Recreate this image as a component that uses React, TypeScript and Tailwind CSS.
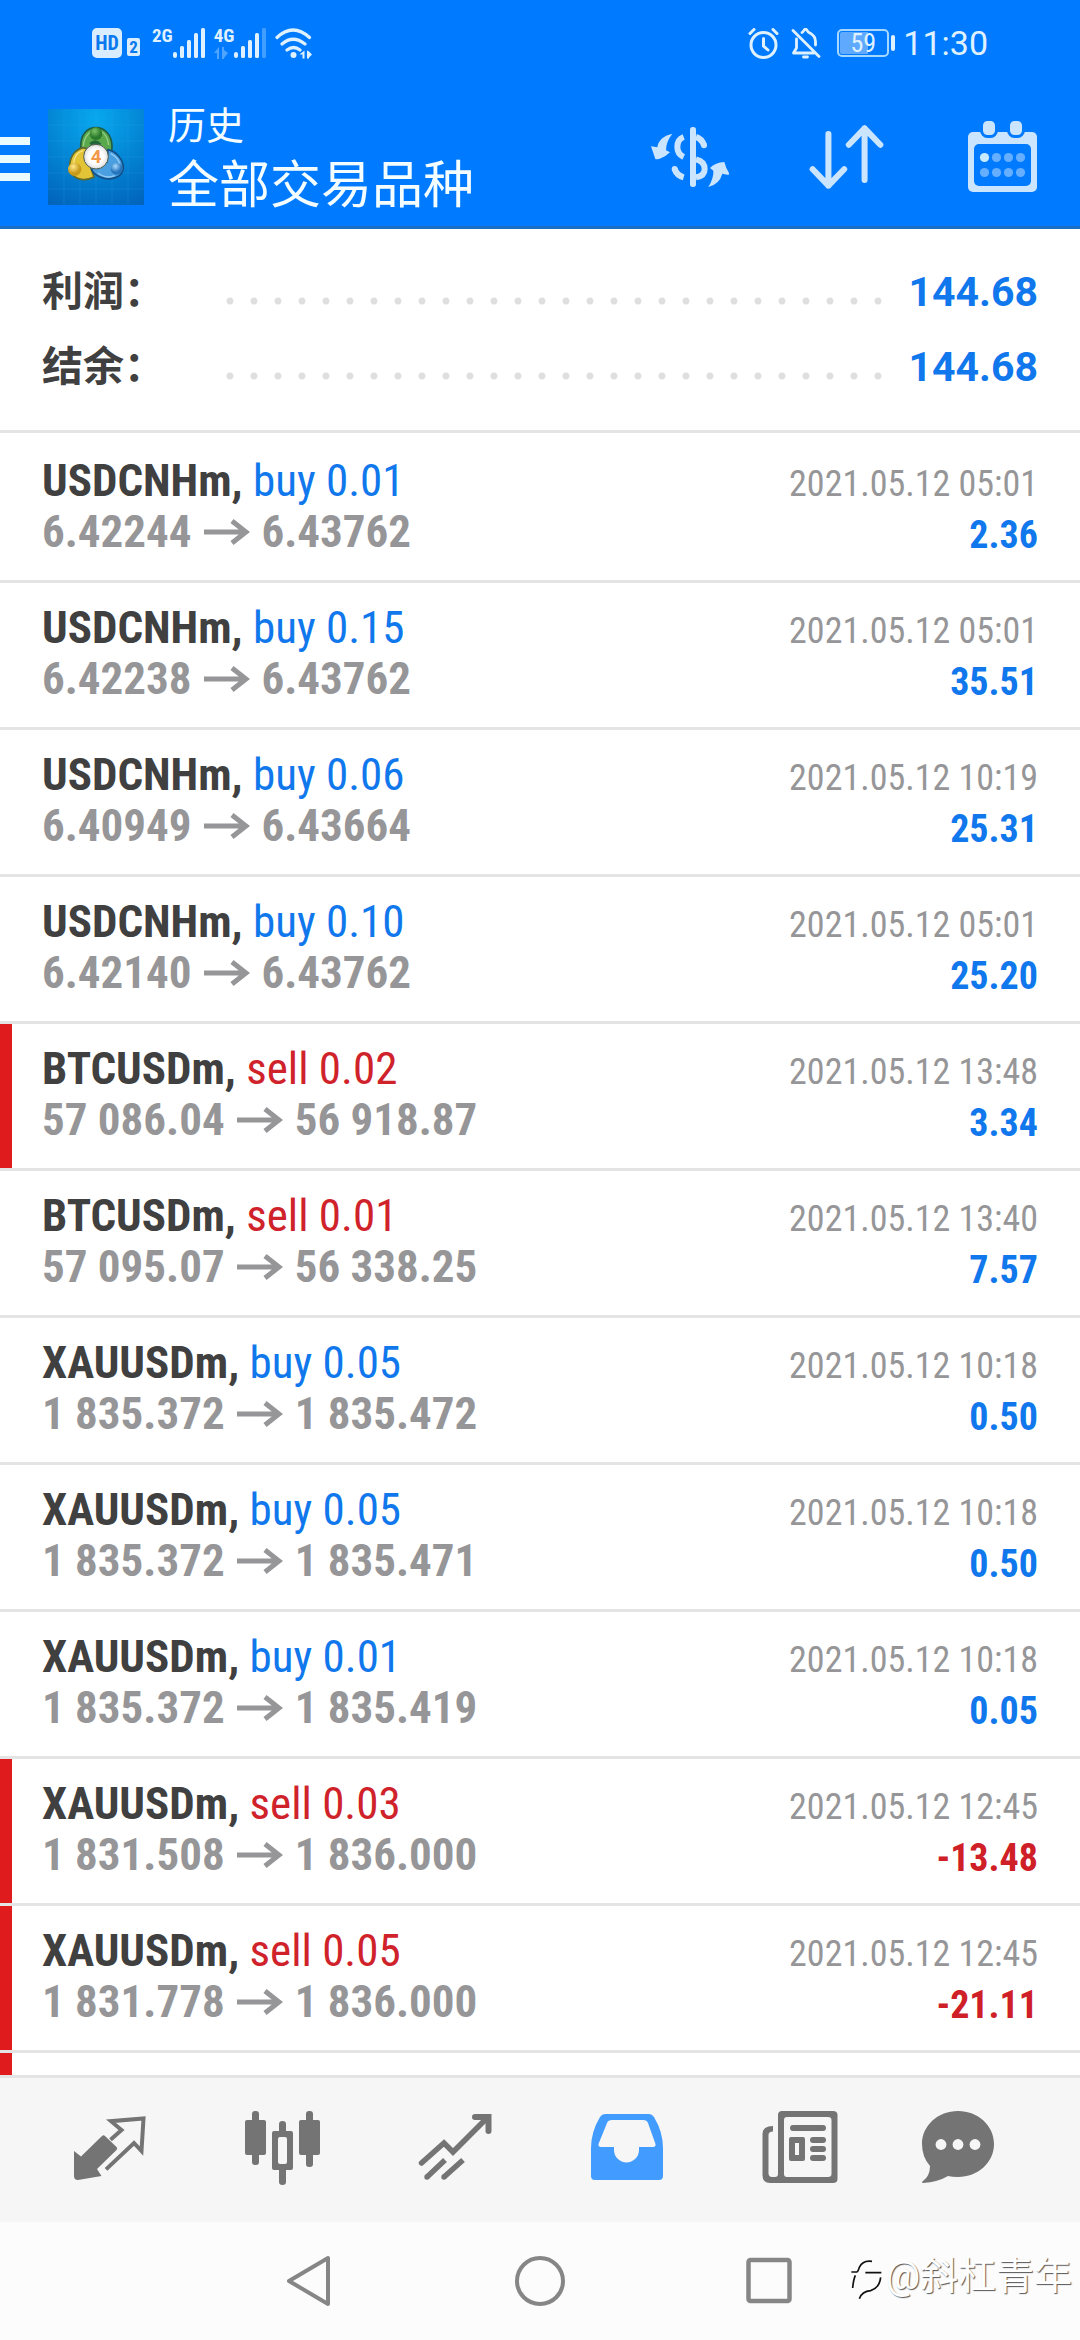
import type { ReactNode } from "react";
import { clsx } from "clsx";

type Deal = {
  symbol: string;
  side: "buy" | "sell";
  volume: string;
  open: string;
  close: string;
  time: string;
  profit: string;
  flagged?: boolean;
};

const deals: Deal[] = [
  { symbol: "USDCNHm", side: "buy", volume: "0.01", open: "6.42244", close: "6.43762", time: "2021.05.12 05:01", profit: "2.36" },
  { symbol: "USDCNHm", side: "buy", volume: "0.15", open: "6.42238", close: "6.43762", time: "2021.05.12 05:01", profit: "35.51" },
  { symbol: "USDCNHm", side: "buy", volume: "0.06", open: "6.40949", close: "6.43664", time: "2021.05.12 10:19", profit: "25.31" },
  { symbol: "USDCNHm", side: "buy", volume: "0.10", open: "6.42140", close: "6.43762", time: "2021.05.12 05:01", profit: "25.20" },
  { symbol: "BTCUSDm", side: "sell", volume: "0.02", open: "57 086.04", close: "56 918.87", time: "2021.05.12 13:48", profit: "3.34", flagged: true },
  { symbol: "BTCUSDm", side: "sell", volume: "0.01", open: "57 095.07", close: "56 338.25", time: "2021.05.12 13:40", profit: "7.57" },
  { symbol: "XAUUSDm", side: "buy", volume: "0.05", open: "1 835.372", close: "1 835.472", time: "2021.05.12 10:18", profit: "0.50" },
  { symbol: "XAUUSDm", side: "buy", volume: "0.05", open: "1 835.372", close: "1 835.471", time: "2021.05.12 10:18", profit: "0.50" },
  { symbol: "XAUUSDm", side: "buy", volume: "0.01", open: "1 835.372", close: "1 835.419", time: "2021.05.12 10:18", profit: "0.05" },
  { symbol: "XAUUSDm", side: "sell", volume: "0.03", open: "1 831.508", close: "1 836.000", time: "2021.05.12 12:45", profit: "-13.48", flagged: true },
  { symbol: "XAUUSDm", side: "sell", volume: "0.05", open: "1 831.778", close: "1 836.000", time: "2021.05.12 12:45", profit: "-21.11", flagged: true },
];

const summary = [
  { label: "利润：", value: "144.68" },
  { label: "结余：", value: "144.68" },
];

function SignalBars({ dimLast = false }: { dimLast?: boolean }) {
  return (
    <svg viewBox="0 0 33 30" className="h-[30px] w-[33px]" fill="currentColor" aria-hidden="true">
      <rect x="0" y="24" width="4" height="6" rx="2" />
      <rect x="7" y="18" width="4" height="12" rx="1.5" />
      <rect x="14" y="12" width="4" height="18" rx="1.5" />
      <rect x="21" y="5" width="4" height="25" rx="1.5" />
      <rect x="28" y="0" width="4" height="30" rx="1.5" opacity={dimLast ? 0.3 : 1} />
    </svg>
  );
}

function StatusBar() {
  return (
    <div className="flex h-[87px] items-center justify-between pr-[92px] pb-px pl-[92px] font-['Roboto_Condensed',Roboto,sans-serif] text-[#dff1ff]">
      <div className="flex items-center">
        <span className="flex h-[30px] w-[30px] items-center justify-center rounded-[5px] bg-[#d9edff] text-[20px] leading-none font-bold text-[#0a78ee]">
          HD
        </span>
        <span className="mt-2 ml-[5px] flex h-[18px] w-[13px] items-center justify-center rounded-[2px] bg-[#d9edff] text-[17px] leading-none font-bold text-[#0a78ee]">
          2
        </span>
        <span className="ml-3 self-start text-[19px] leading-[15px] font-bold">2G</span>
        <SignalBars />
        <div className="ml-2 flex flex-col self-start">
          <span className="text-[19px] leading-[15px] font-bold">4G</span>
          <svg viewBox="0 0 14 12" className="mt-1 h-3 w-3.5" fill="currentColor" opacity="0.35" aria-hidden="true">
            <path d="M5 0v12H3V6H0zM8 0h2v3l4 3-4 5V12H8z" />
          </svg>
        </div>
        <SignalBars dimLast />
        <svg viewBox="0 0 37 31" className="ml-2 h-[31px] w-[37px]" fill="none" stroke="currentColor" strokeWidth="3.2" strokeLinecap="round" aria-hidden="true">
          <path d="M2 9.500Q18 -5.500 34.500 9.500M7 16q11-9.500 23 0M12 22q6.500-5 13 0" />
          <circle cx="18.500" cy="27" r="3" fill="currentColor" stroke="none" />
          <path d="M29.500 22.500v8h-2v-4h-3zM32 22.500l2 1 3 3-3 3v1h-2z" fill="currentColor" stroke="none" />
        </svg>
      </div>

      <div className="flex items-center">
        <svg viewBox="0 0 31 31" className="h-[31px] w-[31px]" fill="none" stroke="currentColor" strokeWidth="3" strokeLinecap="round" aria-hidden="true">
          <circle cx="15.500" cy="17" r="12.500" />
          <path d="M15.500 10.500v7.500l4.500 4M2 5.500l4-4M25 1.500l4 4" />
        </svg>
        <svg viewBox="0 0 30 31" className="ml-3 h-[31px] w-[30px]" fill="none" stroke="currentColor" strokeWidth="2.800" strokeLinecap="round" strokeLinejoin="round" aria-hidden="true">
          <path d="M2 2.500l26 26M5.500 11v9l-3 5H23M11 4.500c2-.8 2-3.500 3.500-3.500s1.500 2.500 3.500 3.500c4 2 6.500 5 6.500 9V17" />
          <path d="M12.500 29h4" />
        </svg>
        <div className="ml-4 flex items-center">
          <span className="flex h-7 w-[52px] items-center justify-center rounded-[5px] border-2 border-[#a6d8ff] bg-linear-to-r from-[#5fa9ff] from-60% to-transparent to-60% bg-clip-content p-px text-[26px] leading-none">
            59
          </span>
          <span className="ml-0.5 h-4 w-1 rounded-sm bg-[#dff1ff]" />
        </div>
        <time className="ml-2 font-[Roboto,sans-serif] text-[34px] leading-none">11:30</time>
      </div>
    </div>
  );
}

function Logo() {
  return (
    <svg viewBox="0 0 288 288" className="h-24 w-24 shrink-0" role="img" aria-label="MetaTrader 4">
      <defs>
        <radialGradient id="sky" cx="0.5" cy="0.1" r="1">
          <stop offset="0" stopColor="#08a8ee" />
          <stop offset="0.55" stopColor="#0382d2" />
          <stop offset="1" stopColor="#0164bb" />
        </radialGradient>
        <radialGradient id="white">
          <stop offset="0.6" stopColor="#fff" />
          <stop offset="1" stopColor="#dcdcdc" />
        </radialGradient>
        <radialGradient id="green" cx="0.4" cy="0.3">
          <stop offset="0" stopColor="#7cc268" />
          <stop offset="1" stopColor="#2c7a2c" />
        </radialGradient>
        <radialGradient id="yellow" cx="0.4" cy="0.3">
          <stop offset="0" stopColor="#ffe98a" />
          <stop offset="1" stopColor="#c79a1a" />
        </radialGradient>
        <radialGradient id="blue" cx="0.4" cy="0.3">
          <stop offset="0" stopColor="#a9dcff" />
          <stop offset="1" stopColor="#2473bb" />
        </radialGradient>
      </defs>
      <rect width="288" height="288" fill="url(#sky)" />
      <path
        d="M48 0v288M96 0v288M144 0v288M192 0v288M240 0v288M0 48h288M0 96h288M0 144h288M0 192h288M0 240h288"
        stroke="#3bb4f2"
        strokeWidth="2"
        opacity="0.25"
      />
      <g strokeWidth="5">
        <path d="M98 120C96 76 118 56 144 56S192 78 192 112Q192 134 184 148L120 130Z" fill="#5aa84c" stroke="#1f5f45" />
        <path d="M138 204C112 218 84 212 72 194C58 168 66 128 104 116L122 120L130 180Z" fill="#e3c437" stroke="#5f6a2c" />
        <path d="M180 122C206 128 226 152 226 178C222 208 184 216 156 204C142 198 134 190 130 180L176 160Z" fill="#4a9fe0" stroke="#124f86" />
      </g>
      <g fill="none" strokeWidth="4" opacity="0.7">
        <path d="M106 112C108 82 124 66 144 65S178 80 182 108" stroke="#b5e3a0" />
        <path d="M78 176C74 148 86 130 106 125" stroke="#fff3a6" />
        <path d="M188 134C206 142 214 156 216 170M150 192C168 206 186 206 200 200" stroke="#b4e0ff" />
      </g>
      <path d="M124 102Q144 84 160 104L152 112H132Z" fill="#24683a" />
      <circle cx="144" cy="74" r="19" fill="url(#green)" />
      <circle cx="80" cy="181" r="20" fill="url(#yellow)" />
      <circle cx="206" cy="179" r="18" fill="url(#blue)" />
      <circle cx="144" cy="143" r="37" fill="url(#white)" stroke="#4a5a4a" strokeWidth="3" />
      <text x="144" y="163" textAnchor="middle" fontSize="56" fontWeight="700" fontFamily="Roboto, sans-serif" fill="#f39a4a">
        4
      </text>
    </svg>
  );
}

function MoneyIcon() {
  return (
    <svg viewBox="33 60 234 180" className="h-[60px] w-[78px]" fill="currentColor" aria-hidden="true">
      <path d="M97 80Q56 90 52 121L33 118Q40 138 46 156Q54 158 64 153Q78 148 90 136L78 130Q78 104 97 80Z" />
      <path d="M205 240Q222 212 220 191L210 183Q226 166 253 165Q258 185 267 198L266 204L247 200Q238 232 205 240Z" />
      <rect x="150" y="60" width="18" height="180" rx="8" />
      <g fill="none" stroke="currentColor" strokeWidth="18">
        <path d="M131 90Q112 97 112 120Q112 141 131 150" />
        <path d="M168 157Q194 163 194 186Q194 207 168 211" />
        <path d="M131 211Q110 205 104 186M168 90Q185 95 192 115" />
      </g>
      <circle cx="104" cy="186" r="9" />
      <circle cx="192" cy="115" r="9" />
    </svg>
  );
}

function SortIcon() {
  return (
    <svg viewBox="506 59 224 191" className="h-16 w-[75px]" fill="none" stroke="currentColor" strokeWidth="18" strokeLinecap="round" strokeLinejoin="round" aria-hidden="true">
      <path d="M564 86V240M517 191L564 240L611 191" />
      <path d="M672 223V69M625 118L672 69L719 118" />
    </svg>
  );
}

function CalendarIcon() {
  return (
    <svg viewBox="0 0 69 71" className="h-[71px] w-[69px]" aria-hidden="true">
      <rect y="11" width="69" height="60" rx="5" fill="currentColor" />
      <rect x="6" y="23" width="57" height="42" rx="5" fill="#007bff" />
      <g fill="currentColor" stroke="#007bff" strokeWidth="3">
        <rect x="13.500" y="-1.500" width="15" height="17" rx="6" />
        <rect x="40.500" y="-1.500" width="15" height="17" rx="6" />
      </g>
      {[36.5, 51.5].map((y) =>
        [16.5, 28.5, 40.5, 52.5].map((x) => (
          <circle key={`${x}-${y}`} cx={x} cy={y} r="4.600" fill={x < 20 && y < 40 ? "#c6eaff" : "#66aeff"} />
        )),
      )}
    </svg>
  );
}

function AppBar() {
  return (
    <div className="flex h-[142px] items-center border-b-3 border-[#1a6fc4]">
      <button type="button" aria-label="菜单" className="mr-[18px]">
        <svg viewBox="0 0 30 56" className="h-14 w-[30px]" fill="#e9fbff" aria-hidden="true">
          <path d="M0 8h30v8H0zM0 26h30v8H0zM0 44h30v8H0z" />
        </svg>
      </button>
      <Logo />
      <div className="ml-6 flex-1 pt-1.5 text-[#f4fdff]">
        <p className="text-[38px] leading-[52px]">历史</p>
        <h1 className="text-[51px] leading-[68px]">全部交易品种</h1>
      </div>
      <div className="flex text-[#cce5ff]">
        <HeaderButton label="资金">
          <MoneyIcon />
        </HeaderButton>
        <HeaderButton label="排序">
          <SortIcon />
        </HeaderButton>
        <HeaderButton label="日期">
          <CalendarIcon />
        </HeaderButton>
      </div>
    </div>
  );
}

function HeaderButton({ label, children }: { label: string; children: ReactNode }) {
  return (
    <button type="button" aria-label={label} className="flex w-[156px] items-center justify-center">
      {children}
    </button>
  );
}

function Summary() {
  return (
    <dl className="border-b-3 border-[#e4e4e4] px-[42px] pt-[26px] pb-[25px] text-[41px] leading-[75px] font-bold">
      {summary.map((row) => (
        <div key={row.label} className="flex items-center">
          <dt className="w-44 text-[#404040]">{row.label}</dt>
          <dd className="flex flex-1 items-center">
            <span className="mt-4 mr-4 h-2 flex-1 bg-[radial-gradient(circle,#dfdfdf_3px,transparent_4px)] bg-[length:24px_8px] bg-repeat-x" />
            <span className="text-[#1078ec]">{row.value}</span>
          </dd>
        </div>
      ))}
    </dl>
  );
}

function Arrow() {
  return (
    <svg viewBox="0 0 46 26" className="h-[26px] w-[46px]" fill="none" stroke="currentColor" strokeWidth="5" aria-label="→">
      <path d="M0 13h42M28 2l14 11-14 11" />
    </svg>
  );
}

function DealRow({ deal }: { deal: Deal }) {
  const sell = deal.side === "sell";
  const loss = deal.profit.startsWith("-");
  return (
    <li className="flex h-[147px] shrink-0 border-b-3 border-[#e4e4e4]">
      <span className={clsx("w-3", deal.flagged && "bg-[#e01b1e]")} />
      <div className="flex flex-1 items-baseline justify-between pt-[19px] pr-[42px] pl-[30px] leading-[51px]">
        <div className="text-[45px] font-bold">
          <p className="text-[#404040]">
            {deal.symbol},{" "}
            <span className={clsx("font-normal", sell ? "text-[#d0222a]" : "text-[#1078ec]")}>
              {deal.side} {deal.volume}
            </span>
          </p>
          <p className="flex items-center gap-3 text-[#969698]">
            {deal.open}
            <Arrow />
            {deal.close}
          </p>
        </div>
        <div className="text-right">
          <p className="text-[36px] text-[#969698]">{deal.time}</p>
          <p className={clsx("text-[38px] font-bold", loss ? "text-[#cf2027]" : "text-[#1078ec]")}>{deal.profit}</p>
        </div>
      </div>
    </li>
  );
}

function TabIcon({ children }: { children: ReactNode }) {
  return (
    <svg viewBox="0 0 80 80" className="h-20 w-20" fill="currentColor" aria-hidden="true">
      {children}
    </svg>
  );
}

const tabs: { label: string; icon: ReactNode }[] = [
  {
    label: "行情",
    icon: (
      <TabIcon>
        <path d="M4 41L11 46.500L32 26Q33.500 24.500 35 26L46.500 37Q48 38.500 46.500 40L27 59L31.500 66L8 70Q4 70 4 66Z" />
        <path d="M42 28.500L51.500 20L41 11.200L73.500 8.500L71.500 41L64 33L37.500 58" fill="none" stroke="currentColor" strokeWidth="4" strokeLinecap="square" />
      </TabIcon>
    ),
  },
  {
    label: "图表",
    icon: (
      <TabIcon>
        <rect x="2" y="10" width="21" height="35" rx="2" />
        <rect x="9" y="1" width="7" height="54" rx="3" />
        <path
          fillRule="evenodd"
          d="M31 21H48Q50 21 50 23V58Q50 60 48 60H31Q29 60 29 58V23Q29 21 31 21ZM37 27Q35 27 35 29V52Q35 54 37 54H42Q44 54 44 52V29Q44 27 42 27Z"
        />
        <path d="M36 22V14Q36 11 39.500 11T43 14V22ZM36 59V72Q36 75 39.500 75T43 72V59Z" />
        <rect x="56" y="10" width="21" height="35" rx="2" />
        <rect x="63" y="1" width="7" height="56" rx="3" />
      </TabIcon>
    ),
  },
  {
    label: "交易",
    icon: (
      <TabIcon>
        <g fill="none" stroke="currentColor" strokeWidth="5.500">
          <path d="M6.500 53L29 33L38 42L72 8" strokeLinecap="round" />
          <path d="M60 7H73.500V21" strokeWidth="6" strokeLinecap="round" />
          <path d="M12 67L30 50M29 67L48 50" />
        </g>
        <circle cx="12" cy="67" r="2.700" />
        <circle cx="29" cy="67" r="2.700" />
      </TabIcon>
    ),
  },
  {
    label: "历史",
    icon: (
      <TabIcon>
        <path
          fillRule="evenodd"
          d="M18 4H62Q65 4 67 7Q76 22 76 38V66Q76 70 72 70H8Q4 70 4 66V38Q4 22 13 7Q15 4 18 4ZM25 10Q21 10 20 13L11.500 34Q11 37 14 37H27V40A12.500 12.500 0 0 0 52 40V37H66Q69 37 68.500 34L61 13Q60 10 56 10Z"
        />
      </TabIcon>
    ),
  },
  {
    label: "新闻",
    icon: (
      <TabIcon>
        <path
          fillRule="evenodd"
          d="M22 1H73Q77.500 1 77.500 5V69Q77.500 73 73 73H10Q2.500 73 2.500 65V24Q2.500 16 13 16V21.500Q8.500 21.500 8.500 25V63Q8.500 67 12 67H15Q18 67 18 64V5Q18 1 22 1ZM27 7Q24 7 24 10V64Q24 67 27 67H68Q71.500 67 71.500 64V10Q71.500 7 68 7Z"
        />
        <rect x="30" y="15" width="36" height="6" rx="3" />
        <path fillRule="evenodd" d="M31 27H43Q45 27 45 29V49Q45 51 43 51H31Q29 51 29 49V29Q29 27 31 27ZM35 33V45H39V33Z" />
        <rect x="50" y="27" width="16" height="6" rx="3" />
        <rect x="50" y="36" width="16" height="6" rx="3" />
        <rect x="50" y="45" width="16" height="6" rx="3" />
      </TabIcon>
    ),
  },
  {
    label: "消息",
    icon: (
      <TabIcon>
        <path d="M40 1C60 1 76 15.500 76 34S60 67 40 67Q34 67 30 66Q20 72 5 73Q3 72.500 5 71Q12 66 12 56Q4 47 4 34C4 15.500 20 1 40 1Z" />
        <g fill="#f6f6f6">
          <circle cx="23" cy="34.500" r="5.400" />
          <circle cx="40" cy="34.500" r="5.400" />
          <circle cx="57" cy="34.500" r="5.400" />
        </g>
      </TabIcon>
    ),
  },
];

function TabBar() {
  return (
    <nav className="flex border-t-3 border-[#e4e4e4] bg-[#f6f6f6] py-8 pr-[50px] pl-6">
      {tabs.map((tab) => (
        <button
          key={tab.label}
          type="button"
          aria-label={tab.label}
          className={clsx(
            "flex flex-1 justify-center last:w-36 last:flex-none",
            tab.label === "历史" ? "text-[#429bff]" : "text-[#747474]",
          )}
        >
          {tab.icon}
        </button>
      ))}
    </nav>
  );
}

function SystemNav() {
  return (
    <div className="relative flex h-[118px] items-center justify-center gap-[174px] bg-[#fcfcfc] text-[#868686]">
      <button type="button" aria-label="返回">
        <svg viewBox="0 0 56 56" className="h-14 w-14" fill="none" stroke="currentColor" strokeWidth="4" strokeLinejoin="round" aria-hidden="true">
          <path d="M7 28L46 5V51Z" />
        </svg>
      </button>
      <button type="button" aria-label="主页">
        <svg viewBox="0 0 56 56" className="h-14 w-14" fill="none" stroke="currentColor" strokeWidth="4" aria-hidden="true">
          <circle cx="28" cy="28" r="23" />
        </svg>
      </button>
      <button type="button" aria-label="最近任务">
        <svg viewBox="0 0 56 56" className="h-14 w-14" fill="none" stroke="currentColor" strokeWidth="4.500" aria-hidden="true">
          <rect x="6.500" y="7" width="41" height="41" rx="2" />
        </svg>
      </button>
      <div className="absolute right-2 bottom-9 flex items-center gap-1 text-[38px] leading-[56px] text-white [text-shadow:1px_1px_1px_#555]">
        <svg viewBox="0 0 96 120" className="mt-2 h-10 w-8" fill="none" stroke="#111" strokeWidth="5" aria-hidden="true">
          <path d="M66 4Q38 0 28 22Q24 36 20 36H4M46 38H94M16 46Q10 60 8 84M92 52Q88 84 62 92Q36 94 28 116" />
        </svg>
        @斜杠青年
      </div>
    </div>
  );
}

export default function App() {
  return (
    <div className="flex h-screen flex-col bg-white font-[Roboto,'Noto_Sans_CJK_SC',sans-serif]">
      <header className="bg-[#007bff]">
        <StatusBar />
        <AppBar />
      </header>
      <Summary />
      <ul className="flex min-h-0 flex-1 flex-col overflow-hidden pt-[3px] font-['Roboto_Condensed',Roboto,sans-serif]">
        {deals.map((deal, i) => (
          <DealRow key={i} deal={deal} />
        ))}
        <li className="flex-1 border-l-12 border-[#e01b1e]" />
      </ul>
      <TabBar />
      <SystemNav />
    </div>
  );
}
